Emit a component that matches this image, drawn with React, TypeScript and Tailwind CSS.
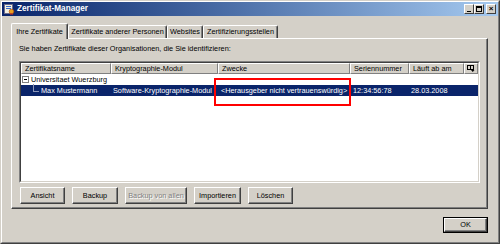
import { ReactNode } from 'react';

const FONT = { fontFamily: '"Liberation Sans", Arial, sans-serif' };

const TABS = [
  { label: 'Ihre Zertifikate', w: 'w-[57px]', active: true },
  { label: 'Zertifikate anderer Personen', w: 'w-[99px]', active: false },
  { label: 'Websites', w: 'w-[36px]', active: false },
  { label: 'Zertifizierungsstellen', w: 'w-[75px]', active: false },
];

const COLUMNS = [
  { label: 'Zertifikatsname', w: 'w-[90px]' },
  { label: 'Kryptographie-Modul', w: 'w-[107px]' },
  { label: 'Zwecke', w: 'w-[132px]' },
  { label: 'Seriennummer', w: 'w-[59px]' },
  { label: 'Läuft ab am', w: 'w-[55px]' },
];

const BUTTONS = [
  { label: 'Ansicht', w: 'w-[45px]', disabled: false },
  { label: 'Backup', w: 'w-[46px]', disabled: false },
  { label: 'Backup von allen', w: 'w-[62px]', disabled: true },
  { label: 'Importieren', w: 'w-[47px]', disabled: false },
  { label: 'Löschen', w: 'w-[45px]', disabled: false },
];

function Button({ children, w, disabled }: { children: ReactNode; w: string; disabled?: boolean }) {
  return (
    <div className={`${w} h-[17px] border border-t-white border-l-white border-r-[#404040] border-b-[#404040] shadow-[inset_-1px_-1px_0_#808080] flex items-center justify-center`}>
      <span className={disabled ? 'text-[#808080] [text-shadow:1px_1px_0_#fff]' : 'text-black'}>{children}</span>
    </div>
  );
}

function TitleButton({ children }: { children: ReactNode }) {
  return (
    <div className="w-[10px] h-[10px] bg-[#d4d0c8] border border-t-white border-l-white border-r-[#404040] border-b-[#404040] flex items-center justify-center">
      {children}
    </div>
  );
}

export default function App() {
  return (
    <div className="relative w-[500px] h-[244px] bg-[#d4d0c8] border border-t-[#d4d0c8] border-l-[#d4d0c8] border-r-[#404040] border-b-[#404040] text-[7.3px] leading-none text-black" style={FONT}>
      <div className="h-full border border-t-white border-l-white border-r-[#808080] border-b-[#808080] flex flex-col">
        {/* Title bar */}
        <div className="h-[14px] bg-gradient-to-r from-[#0a246a] to-[#a6caf0] flex items-center pl-[1px] pr-[2px]">
          <svg width="12" height="12" viewBox="0 0 12 12" className="shrink-0">
            <rect x="1.5" y="1.5" width="8" height="9" fill="#f4f0e0" stroke="#6b6b8a" />
            <rect x="3" y="3" width="5" height="1" fill="#3a6ac8" />
            <rect x="3" y="5" width="5" height="1" fill="#3a6ac8" />
            <circle cx="8.5" cy="8.5" r="2.3" fill="#e8a020" stroke="#b05010" strokeWidth="0.7" />
            <path d="M7.5 10.2 L7 12 L8.5 11.2 L10 12 L9.5 10.2" fill="#d03020" />
          </svg>
          <span className="ml-[2px] text-white font-bold text-[8.2px]">Zertifikat-Manager</span>
          <div className="ml-auto flex items-center">
            <TitleButton>
              <div className="w-[4px] h-[1px] bg-black mt-[4px]" />
            </TitleButton>
            <TitleButton>
              <div className="w-[6px] h-[6px] border border-black border-t-2" />
            </TitleButton>
            <div className="w-[2px]" />
            <TitleButton>
              <span className="text-[8px] font-bold leading-none">×</span>
            </TitleButton>
          </div>
        </div>

        {/* Tabs */}
        <div className="pl-[9px] pr-[10px] mt-[7px]">
          <div className="h-[15px] flex items-end">
            {TABS.map((t) => (
              <div
                key={t.label}
                className={`${t.w} ${t.active ? 'h-[16px] -mb-px relative z-10 bg-[#d4d0c8] pt-[1px]' : 'h-[13px]'} border-t border-l border-t-white border-l-white border-r border-r-[#404040] shadow-[inset_-1px_0_0_#808080] rounded-t-[2px] flex items-center justify-center`}
              >
                {t.label}
              </div>
            ))}
          </div>

          {/* Panel */}
          <div className="h-[171px] border border-t-white border-l-white border-r-[#404040] border-b-[#404040] shadow-[inset_-1px_-1px_0_#808080] px-[7px] flex flex-col">
            <p className="mt-[5px] h-[9px] flex items-center">Sie haben Zertifikate dieser Organisationen, die Sie identifizieren:</p>

            {/* List view */}
            <div className="mt-[8px] h-[122px] border border-t-[#808080] border-l-[#808080] border-r-white border-b-white">
              <div className="h-full bg-white border border-t-[#404040] border-l-[#404040] border-r-[#d4d0c8] border-b-[#d4d0c8]">
                <div className="flex h-[11px]">
                  {COLUMNS.map((c) => (
                    <div key={c.label} className={`${c.w} h-full bg-[#d4d0c8] border-t border-l border-t-white border-l-white border-r border-b border-r-[#808080] border-b-[#808080] flex items-center pl-[3px]`}>
                      {c.label}
                    </div>
                  ))}
                  <div className="flex-1 h-full bg-[#d4d0c8] border-t border-l border-t-white border-l-white border-r border-b border-r-[#808080] border-b-[#808080] flex items-center justify-center">
                    <svg width="8" height="7" viewBox="0 0 8 7">
                      <rect x="0.5" y="0.5" width="6" height="4" fill="none" stroke="#000" />
                      <path d="M3.5 0.5 V4.5" stroke="#000" />
                      <path d="M4 5 L7.5 5 L5.75 7 Z" fill="#000" />
                    </svg>
                  </div>
                </div>

                {/* Row 1 */}
                <div className="h-[11px] flex items-center">
                  <div className="ml-[1px] w-[7px] h-[7px] border border-[#808080] bg-white flex items-center justify-center">
                    <div className="w-[3px] h-px bg-black" />
                  </div>
                  <span className="ml-[2px]">Universitaet Wuerzburg</span>
                </div>

                {/* Row 2 (selected) */}
                <div className="h-[11px] flex items-center bg-[#0a246a] text-white">
                  <div className={`${COLUMNS[0].w} h-full flex items-center`}>
                    <div className="ml-[12px] w-[6px] h-[8px] -mt-[6px] border-l border-b border-[#8c96b8]" />
                    <span className="ml-[2px]">Max Mustermann</span>
                  </div>
                  <div className={`${COLUMNS[1].w} pl-[2px]`}>Software-Kryptographie-Modul</div>
                  <div className={`${COLUMNS[2].w} pl-[3px]`}>&lt;Herausgeber nicht vertrauenswürdig&gt;</div>
                  <div className={`${COLUMNS[3].w} pl-[3px]`}>12:34:56:78</div>
                  <div className={`${COLUMNS[4].w} pl-[2px]`}>28.03.2008</div>
                </div>
              </div>
            </div>

            {/* Buttons */}
            <div className="mt-[4px] ml-[1px] flex gap-[7px]">
              {BUTTONS.map((b) => (
                <Button key={b.label} w={b.w} disabled={b.disabled}>
                  {b.label}
                </Button>
              ))}
            </div>
          </div>

          {/* OK */}
          <div className="mt-[8px] flex justify-end">
            <div className="w-[45px] h-[16px] border border-black">
              <div className="h-full border border-t-white border-l-white border-r-[#404040] border-b-[#404040] shadow-[inset_-1px_-1px_0_#808080] flex items-center justify-center">
                OK
              </div>
            </div>
          </div>
        </div>
      </div>

      {/* Red annotation box */}
      <div className="absolute left-[213px] top-[77px] w-[137px] h-[28px] border-2 border-[#ff0000]" />
    </div>
  );
}
